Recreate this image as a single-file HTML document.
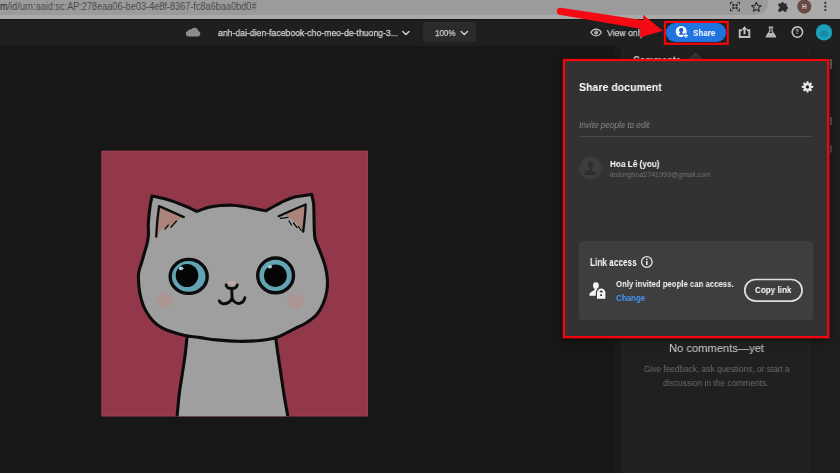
<!DOCTYPE html>
<html><head><meta charset="utf-8">
<style>
html,body{margin:0;padding:0;}
body{width:840px;height:473px;overflow:hidden;background:#171717;font-family:"Liberation Sans",sans-serif;position:relative;color:#fff;}
.abs{position:absolute;}
svg{overflow:visible;}
#chrome{left:0;top:0;width:840px;height:18.5px;background:#aaaaaa;}
#urlpill{left:-20px;top:-8.7px;width:788px;height:24px;border-radius:12px;background:#9b9b9b;}
#hdr{left:0;top:18.5px;width:840px;height:27.6px;background:#1f1f1f;border-top:1.5px solid #141414;box-sizing:border-box;}
#canvas{left:0;top:46.1px;width:840px;height:428px;background:#171717;}
#comments{left:620.5px;top:46.1px;width:191.2px;height:428px;background:#202020;box-shadow:-6.5px 0 0 #1b1b1b;}
#rstrip{left:811.7px;top:46.1px;width:29px;height:428px;background:#1e1e1e;border-left:1px solid #191919;box-sizing:border-box;}
.t{position:absolute;white-space:nowrap;transform-origin:0 50%;will-change:transform;}
#panel{left:562.8px;top:58.9px;width:266.6px;height:279.4px;box-sizing:border-box;border:2.3px solid #f5050d;background:#323232;box-shadow:0 2px 8px rgba(0,0,0,.5);}
#linkbox{left:578.6px;top:240.8px;width:234.4px;height:78.8px;border-radius:3.5px;background:#3e3e3e;}
#copy{left:743.6px;top:279px;width:59px;height:22.8px;box-sizing:border-box;border:1.5px solid #e6e6e6;border-radius:11.4px;}
</style></head><body>
<div id="chrome" class="abs"></div>
<div id="urlpill" class="abs"></div>
<div class="t" style="left:0px;top:0.1px;font-size:10px;line-height:14px;color:#484848;transform:scaleX(0.9154);"><span style="color:#1e1e1e">m</span>/id/urn:aaid:sc:AP:278eaa06-be03-4e8f-8367-fc8a6baa0bd0#</div>
<div id="hdr" class="abs"></div>
<div id="canvas" class="abs"></div>
<div id="comments" class="abs"></div>
<div id="rstrip" class="abs"></div>
<div class="abs" style="left:830px;top:59px;width:2px;height:10px;background:#5a5a5a;"></div>
<div class="abs" style="left:830px;top:117px;width:2px;height:8px;background:#505050;"></div>
<div class="abs" style="left:830px;top:145px;width:2px;height:8px;border-radius:0 2px 2px 0;background:#4a4a4a;"></div>
<div class="t" style="left:218px;top:26.0px;font-size:9.3px;line-height:14px;color:#d6d6d6;transform:scaleX(0.9338);-webkit-text-stroke:0.25px #d6d6d6;">anh-dai-dien-facebook-cho-meo-de-thuong-3...</div>
<div class="abs" style="left:422.7px;top:21.9px;width:53.1px;height:20.3px;border-radius:3px;background:#2b2b2b;"></div>
<div class="t" style="left:434.5px;top:26.0px;font-size:9.3px;line-height:14px;color:#cfcfcf;transform:scaleX(0.862);-webkit-text-stroke:0.25px #cfcfcf;">100%</div>
<div class="t" style="left:607px;top:26.0px;font-size:9.5px;line-height:14px;color:#cfcfcf;transform:scaleX(0.9136);-webkit-text-stroke:0.25px #cfcfcf;">View only</div>
<svg class="abs" style="left:0;top:0;" width="840" height="473" viewBox="0 0 840 473"><rect x="664.9" y="22" width="62.8" height="21.8" fill="#202020" stroke="#f5050d" stroke-width="2.2"/></svg>
<div class="abs" style="left:666px;top:23.2px;width:60.2px;height:18.6px;border-radius:9.3px;background:#1f74e0;"></div>
<div class="t" style="left:692.9px;top:25.6px;font-size:9.6px;line-height:14px;color:#fff;transform:scaleX(0.8361);font-weight:bold;">Share</div>
<div class="t" style="left:633px;top:53.1px;font-size:11.5px;line-height:14px;color:#e0e0e0;transform:scaleX(0.8076);font-weight:bold;">Comments</div>
<div class="t" style="left:669.3px;top:341.0px;font-size:11.5px;line-height:14px;color:#d0d0d0;transform:scaleX(0.9716);">No comments—yet</div>
<div class="t" style="left:643.6px;top:362.0px;font-size:8.8px;line-height:14px;color:#6c6c6c;transform:scaleX(0.9429);">Give feedback, ask questions, or start a</div>
<div class="t" style="left:663.2px;top:375.5px;font-size:8.8px;line-height:14px;color:#6c6c6c;transform:scaleX(0.9538);">discussion in the comments.</div>
<svg class="abs" style="left:0;top:0;" width="840" height="473" viewBox="0 0 840 473"><path d="M688.500 60 L695.400 53.100 L702.300 60 Z" fill="#323232" stroke="#4a4a4a" stroke-width="1"/></svg>
<svg class="abs" style="left:0;top:0;" width="840" height="473" viewBox="0 0 840 473">
<!-- chrome toolbar icons -->
<g fill="none" stroke="#3a3a3a" stroke-width="1.1">
<path d="M730.5 4.5 V2.2 H732.8 M737.2 2.2 H739.5 V4.5 M739.5 8.500 V10.800 H737.200 M732.800 10.800 H730.500 V8.500"/>
</g>
<g fill="#333">
<circle cx="733.4" cy="4.900" r="1.250"/><circle cx="736.600" cy="4.900" r="1.250"/><circle cx="733.400" cy="8.100" r="1.250"/><circle cx="736.600" cy="8.100" r="1.250"/>
</g>
<path d="M756.4 2.3 L757.8 5.3 L761.1 5.7 L758.6 7.9 L759.3 11.2 L756.4 9.5 L753.5 11.2 L754.2 7.9 L751.7 5.7 L755.0 5.3 Z" fill="none" stroke="#303030" stroke-width="1.2" stroke-linejoin="round"/>
<path d="M778.300 3.600 H781 A1.500 1.500 0 1 1 784 3.600 H786.600 V6.200 A1.500 1.500 0 1 1 786.600 9.200 V11.800 H783.900 A1.400 1.400 0 1 0 781.100 11.800 H778.300 V9.100 A1.400 1.400 0 1 0 778.300 6.300 Z" fill="#2b2b2b"/>
<circle cx="804.300" cy="6.600" r="7.100" fill="#6a4a43"/>
<g fill="#353535"><circle cx="825.300" cy="2.900" r="1.150"/><circle cx="825.300" cy="6.500" r="1.150"/><circle cx="825.300" cy="10.100" r="1.150"/></g>

<!-- cloud -->
<path d="M188.500 36.600 A2.900 2.900 0 0 1 187.900 30.900 A2.700 2.700 0 0 1 191.100 29.500 A4 4 0 0 1 198.400 31 A2.900 2.900 0 0 1 198 36.600 Z" fill="#8c8c8c"/>
<!-- chevrons -->
<path d="M402.800 31.500 L405.900 34.500 L409 31.500" fill="none" stroke="#d2d2d2" stroke-width="1.400" stroke-linecap="round" stroke-linejoin="round"/>
<path d="M461.100 31.500 L464.300 34.500 L467.500 31.500" fill="none" stroke="#d2d2d2" stroke-width="1.400" stroke-linecap="round" stroke-linejoin="round"/>
<!-- eye -->
<path d="M590.800 32.500 C592.500 29.800 594.300 29.200 596.100 29.200 C597.900 29.200 599.700 29.800 601.400 32.500 C599.700 35.200 597.900 35.800 596.100 35.800 C594.300 35.800 592.500 35.200 590.800 32.500 Z" fill="none" stroke="#c8c8c8" stroke-width="1.200"/>
<circle cx="596.100" cy="32.500" r="1.900" fill="#c8c8c8"/>
<circle cx="595.500" cy="31.900" r="0.700" fill="#202020"/>
<!-- upload/share icon -->
<path d="M742 30.200 H739.700 V37 H749.300 V30.200 H747" fill="none" stroke="#bdbdbd" stroke-width="1.900"/>
<path d="M744.500 26.300 L747.500 29.800 H745.500 V34.200 H743.500 V29.800 H741.500 Z" fill="#c4c4c4"/>
<!-- flask -->
<path d="M768.600 26.400 H773.200 V27.700 H772.600 V30.800 L776.100 36.200 A0.900 0.900 0 0 1 775.300 37.600 H766.500 A0.900 0.900 0 0 1 765.700 36.200 L769.200 30.800 V27.700 H768.600 Z" fill="#b6b6b6"/>
<path d="M770.400 28 H771.400 V31.200 L772.600 33 H769.200 L770.400 31.200 Z" fill="#2a2a2a"/>
<!-- help -->
<circle cx="797.400" cy="32.100" r="5.200" fill="none" stroke="#c2c2c2" stroke-width="1.600"/>
<!-- user avatar -->
<circle cx="824" cy="32.400" r="8.200" fill="#1c9fb8"/>
<path d="M819.500 35 A4.600 4.600 0 0 1 828.500 33.500 A3.600 3.600 0 0 1 826.500 36.800 H821 Z" fill="#188aa6"/>

<!-- share button icon -->
<circle cx="681.200" cy="31.500" r="5.500" fill="#fff"/>
<circle cx="681.200" cy="29.900" r="2.200" fill="#1a5fd0"/>
<path d="M680.300 31.500 H682.100 C682.100 33 683.400 33.600 683.500 34.800 H678.900 C679 33.600 680.300 33 680.300 31.500 Z" fill="#1a5fd0"/>
<circle cx="685.900" cy="35.700" r="2.700" fill="#1f74e0"/>
<path d="M685.900 33.600 V37.800 M683.800 35.700 H688" stroke="#fff" stroke-width="1.300" fill="none"/>

<!-- arrow -->
<path d="M560.700 7.700 L643.400 20.200 L643 14.800 L663 30.700 L640 37.600 L640.300 28.700 L559.300 14.700 A3.600 3.600 0 0 1 560.700 7.700 Z" fill="#f40a12"/>
</svg>

<div class="t" style="left:802px;top:-0.4px;font-size:7px;line-height:14px;color:#d6cbc8;transform:scaleX(0.9086);font-weight:bold;">H</div>
<div class="t" style="left:795.4px;top:25.2px;font-size:8px;line-height:14px;color:#cacaca;transform:scaleX(0.8179);font-weight:bold;">?</div>
<div class="abs" style="left:562.8px;top:58.9px;width:266.6px;height:279.4px;box-shadow:0 2px 8px rgba(0,0,0,.45);"></div>
<svg class="abs" style="left:0;top:0;" width="840" height="473" viewBox="0 0 840 473"><rect x="563.95" y="60.05" width="264.3" height="277.1" fill="#323232" stroke="#f5050d" stroke-width="2.3"/></svg>
<div class="t" style="left:579.3px;top:80.0px;font-size:11px;line-height:14px;color:#fff;transform:scaleX(0.9595);font-weight:bold;">Share document</div>
<div class="t" style="left:579.3px;top:118.2px;font-size:8.8px;line-height:14px;color:#8a8a8a;transform:scaleX(0.924);font-style:italic;">Invite people to edit</div>
<div class="abs" style="left:579.3px;top:135.7px;width:233px;height:1px;background:#494949;"></div>
<div class="t" style="left:609.7px;top:156.6px;font-size:9.5px;line-height:14px;color:#fff;transform:scaleX(0.8621);font-weight:bold;">Hoa Lê (you)</div>
<div class="t" style="left:609.7px;top:167.5px;font-size:7.4px;line-height:14px;color:#747474;transform:scaleX(0.9638);">ledonghoa2741999@gmail.com</div>
<div id="linkbox" class="abs"></div>
<div class="t" style="left:589.9px;top:255.5px;font-size:10px;line-height:14px;color:#fff;transform:scaleX(0.8234);font-weight:bold;">Link access</div>
<div class="t" style="left:616.4px;top:277.3px;font-size:9.2px;line-height:14px;color:#f2f2f2;transform:scaleX(0.8467);font-weight:bold;">Only invited people can access.</div>
<div class="t" style="left:616.4px;top:290.8px;font-size:9.2px;line-height:14px;color:#4496f2;transform:scaleX(0.8664);font-weight:bold;">Change</div>
<svg class="abs" style="left:0;top:0;" width="840" height="473" viewBox="0 0 840 473"><rect x="744.8" y="279.5" width="57.3" height="21.6" rx="10.8" fill="none" stroke="#dedede" stroke-width="1.7"/></svg>
<div class="t" style="left:755.4px;top:283.2px;font-size:9.2px;line-height:14px;color:#fff;transform:scaleX(0.8801);font-weight:bold;">Copy link</div>
<svg class="abs" style="left:0;top:0;" width="840" height="473" viewBox="0 0 840 473">
<!-- gear -->
<g transform="translate(807.500 86.900)" fill="#e6e6e6">
<circle r="3.900"/>
<g id="teeth"><rect x="-1.100" y="-5.600" width="2.200" height="11.200" rx="0.400"/><rect x="-1.100" y="-5.600" width="2.200" height="11.200" rx="0.400" transform="rotate(45)"/><rect x="-1.100" y="-5.600" width="2.200" height="11.200" rx="0.400" transform="rotate(90)"/><rect x="-1.100" y="-5.600" width="2.200" height="11.200" rx="0.400" transform="rotate(135)"/></g>
<circle r="1.600" fill="#1c1c1c"/>
</g>
<!-- avatar silhouette -->
<circle cx="590.500" cy="168.200" r="11.100" fill="#3d3d3d"/>
<ellipse cx="590.500" cy="164.800" rx="2.800" ry="3.400" fill="#2e2e2e"/>
<path d="M584.500 174.900 C584.500 171.500 587.500 170.900 589.300 170.300 L589.300 167.500 H591.700 L591.700 170.300 C593.500 170.900 596.500 171.500 596.500 174.900 Z" fill="#2e2e2e"/>
<!-- info -->
<circle cx="646.800" cy="262" r="5.300" fill="none" stroke="#e2e2e2" stroke-width="1.300"/>
<circle cx="646.800" cy="259.300" r="0.900" fill="#e2e2e2"/>
<rect x="646" y="261" width="1.600" height="4" fill="#e2e2e2"/>
<!-- person + lock -->
<ellipse cx="595.900" cy="285.600" rx="2.900" ry="3.300" fill="#f4f4f4"/>
<path d="M589.300 295.800 C589.300 292.500 591.500 291.600 593.500 290.700 C594.500 290.100 594.600 289.300 594.300 288.200 L597.500 288.200 C597.200 289.300 597.300 290.100 598.300 290.700 L598.300 295.800 Z" fill="#f4f4f4"/>
<path d="M597 298.800 V292.600 A4.200 4.200 0 0 1 605.400 292.600 V298.800 Z" fill="#f4f4f4" stroke="#3e3e3e" stroke-width="2.400" paint-order="stroke"/>
<path d="M599.500 292.300 A1.700 1.700 0 0 1 602.900 292.300 Z" fill="#2a2a2a"/>
<rect x="600.300" y="294.300" width="1.700" height="1.700" fill="#2a2a2a"/>
</svg>

<svg class="abs" style="left:101px;top:150px;" width="268" height="268" viewBox="101 150 268 268">
<defs><clipPath id="sq"><rect x="101.5" y="150.8" width="266.4" height="265.5"/></clipPath></defs>
<rect x="101.5" y="150.8" width="266.4" height="265.5" fill="#93384a"/>
<rect x="102" y="151.3" width="265.4" height="264.5" fill="none" stroke="#a03c50" stroke-width="1"/>
<g clip-path="url(#sq)" stroke="#0c0c0c" stroke-width="3.1" stroke-linejoin="round" stroke-linecap="round">
<!-- body -->
<path d="M187.1 336 C186.8 339.2 185.9 348.6 185.1 355.1 C184.3 361.6 183.1 368.5 182.1 375.2 C181.1 381.9 179.9 388.4 179.1 395.3 C178.3 402.2 177.5 412.4 177.1 416.4 C176.7 420.3 176.9 418.6 176.9 419.0 L288 419 C288.0 418.6 288.4 420.3 287.8 416.4 C287.2 412.4 285.2 402.2 284.1 395.3 C283.0 388.4 282.1 381.9 281.1 375.2 C280.1 368.5 279.0 361.3 278.1 355.1 C277.2 348.9 276.1 340.9 275.7 338.0 Z" fill="#9f9f9f"/>
<!-- head -->
<path d="M152 196 C153.5 196.3 157.6 197.2 161.0 198.0 C164.4 198.8 167.9 199.6 172.3 201.1 C176.7 202.6 183.4 205.3 187.5 207.0 C191.6 208.7 195.3 210.7 196.9 211.4 C198.9 210.7 204.8 208.3 208.8 207.3 C212.8 206.3 216.7 205.8 220.7 205.5 C224.7 205.2 228.6 205.0 232.6 205.2 C236.6 205.4 240.5 206.1 244.5 206.7 C248.5 207.3 252.8 208.3 256.4 209.0 C260.0 209.7 264.4 210.5 266.0 210.8 C267.6 209.9 272.3 207.2 275.5 205.5 C278.7 203.8 281.6 202.0 285.0 200.6 C288.4 199.2 291.2 197.9 295.6 196.8 C300.1 195.8 309.0 194.7 311.7 194.3 C312.0 195.8 313.1 200.3 313.5 203.0 C313.9 205.7 313.8 206.3 313.9 210.4 C314.0 214.5 314.1 223.2 314.2 227.3 C314.3 231.4 314.4 232.8 314.6 235.0 C314.8 237.2 314.7 237.9 315.6 240.6 C316.5 243.3 318.3 246.9 319.9 251.1 C321.5 255.3 323.9 261.3 325.1 265.9 C326.3 270.5 327.0 274.4 327.3 278.6 C327.6 282.8 327.5 287.1 326.8 291.3 C326.1 295.5 324.7 300.1 323.0 304.0 C321.3 307.9 319.5 311.3 316.7 314.5 C313.9 317.7 309.6 320.7 306.1 323.0 C302.6 325.3 300.5 325.8 295.6 328.2 C290.8 330.6 282.9 335.2 277.0 337.3 C271.1 339.4 266.5 339.8 260.0 340.5 C253.5 341.2 245.2 341.4 238.0 341.3 C230.8 341.2 223.0 340.5 216.7 339.9 C210.4 339.3 205.3 338.3 200.0 337.6 C194.7 336.9 190.3 336.7 185.0 335.5 C179.7 334.3 172.6 332.2 168.0 330.5 C163.4 328.8 160.6 327.3 157.5 325.0 C154.4 322.7 151.8 319.8 149.5 316.6 C147.2 313.4 145.1 309.9 143.5 306.0 C141.9 302.1 140.7 297.7 139.8 293.0 C139.0 288.3 138.5 281.8 138.4 278.0 C138.3 274.2 138.6 272.7 139.2 270.0 C139.8 267.3 140.9 264.9 141.8 262.0 C142.7 259.1 143.6 255.5 144.5 252.5 C145.4 249.5 146.3 246.9 147.0 244.0 C147.7 241.1 148.2 238.2 148.4 235.0 C148.6 231.8 148.2 228.3 148.3 225.0 C148.4 221.7 148.7 218.3 149.0 215.0 C149.3 211.7 149.8 208.2 150.3 205.0 C150.8 201.8 151.7 197.5 152.0 196.0 Z" fill="#9f9f9f"/>
<!-- inner ears -->
<path d="M159.1 206.1 L183.8 217.1 L175.7 221.4 L170.6 227.3 L168.1 225.6 L164.7 229 L163 228.1 L156.2 236.6 Z" fill="#aa847b" stroke="none"/>
<path d="M156.2 236.6 C156.6 226 157.6 216 159.1 206.1 C167 209.500 175.500 213.300 183.800 217.100" fill="none" stroke-width="2.300"/>
<path d="M176.500 221 L171 227.200 M168.300 225.300 L165 229" fill="none" stroke-width="1.300"/>
<path d="M284 214.300 L305.700 204.500 L303.200 231.500 L299 226.500 L296 222.500 L291 219 Z" fill="#aa847b" stroke="none"/>
<path d="M278.700 216.300 C288 212 297 208 305.700 204.500 C305.300 213.500 304.300 223 303.200 231.500" fill="none" stroke-width="2.300"/>
<path d="M280.500 218.300 L288 217.300 M289 221 L291.500 225 M293.500 223 L297 227.500 M298.500 226.500 L301.300 230.500" fill="none" stroke-width="1.300"/>
<!-- eyes -->
<ellipse cx="188.700" cy="276.400" rx="18.500" ry="17" fill="#62a4b4" stroke-width="3.400"/>
<ellipse cx="187" cy="275.500" rx="11.300" ry="11.500" fill="#050505" stroke="none"/>
<ellipse cx="181" cy="268.300" rx="2.300" ry="1.900" fill="#a5ccd5" stroke="none"/>
<ellipse cx="275.600" cy="275.400" rx="17.900" ry="17.400" fill="#62a4b4" stroke-width="3.400"/>
<ellipse cx="275.400" cy="275.700" rx="11.400" ry="11.200" fill="#050505" stroke="none"/>
<ellipse cx="269.800" cy="266.600" rx="2.300" ry="1.900" fill="#a5ccd5" stroke="none"/>
<!-- cheeks -->
<ellipse cx="164.600" cy="300.700" rx="8.300" ry="7.200" fill="#aa9593" stroke="none"/>
<ellipse cx="295.100" cy="301.400" rx="8.600" ry="7.600" fill="#aa9593" stroke="none"/>
<!-- nose and mouth -->
<ellipse cx="231.600" cy="282.900" rx="3.700" ry="2.200" fill="#c0a8a2" stroke="none"/>
<path d="M226.100 285 C226.500 287.500 229 288.600 231.600 288.600 C234.300 288.600 236.800 287.500 237.300 285" fill="none" stroke-width="2.900"/>
<path d="M231.700 288.600 L232.100 298.500" fill="none" stroke-width="2.900"/>
<path d="M219.300 300.900 C220.500 303.300 222.500 304 224.500 303.800 C227.500 303.500 230.500 301.500 232.100 298.500 C233 300.800 234.500 302.300 236.400 303 C238 303.600 239.500 303.600 240.500 303.200 C243 302.300 244.500 300.300 244.900 297.600" fill="none" stroke-width="2.900"/>
</g>
</svg>
</body></html>
